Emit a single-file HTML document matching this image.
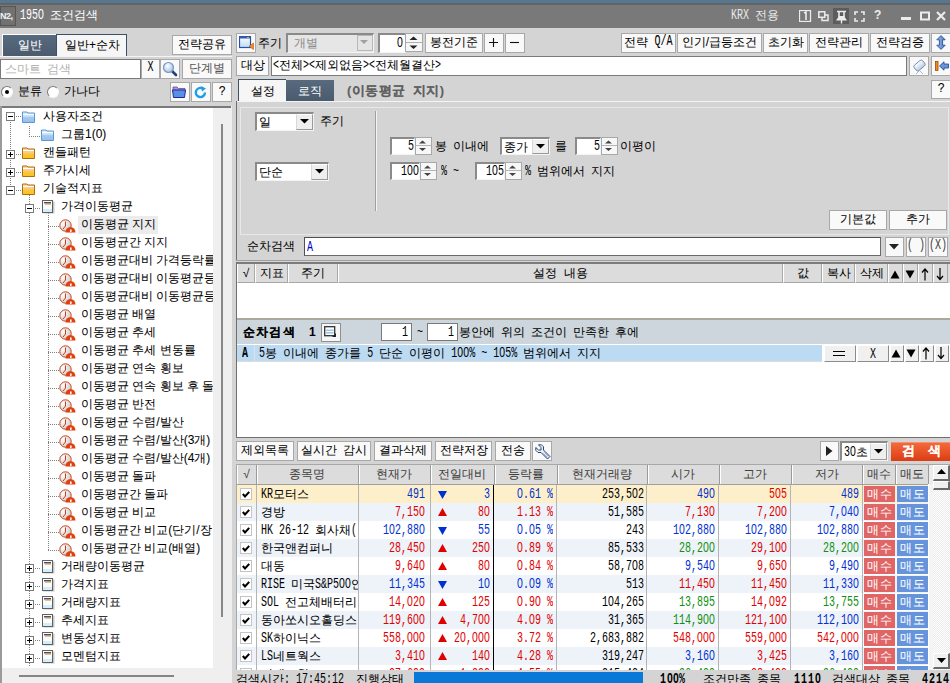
<!DOCTYPE html><html><head><meta charset="utf-8"><style>
*{margin:0;padding:0;box-sizing:content-box}
html,body{width:950px;height:683px;overflow:hidden;background:#d4d4d4;font-family:"Liberation Sans",sans-serif;font-size:12px;color:#000;word-spacing:2.7px}
div{position:absolute}
.t{white-space:nowrap;line-height:14px;-webkit-text-stroke-width:0.05px}
.btn span{-webkit-text-stroke-width:0.05px;position:relative;top:-1px}
.btn{background:#f9f9f9;border:1px solid #a8a8a8;text-align:center;white-space:nowrap}
.inp{background:#fff;border:1px solid #7a7a7a}
.m{word-spacing:0;-webkit-text-stroke-width:0;display:inline-block;font-family:"Liberation Mono",monospace;font-size:10px;transform:scaleY(1.4);transform-origin:50% 60%}
.z{font-style:normal;display:inline-block;width:6px;text-align:center;font-family:"Liberation Sans",sans-serif;font-size:10.5px;line-height:10px}
.inset{background:#fff;border-top:2px solid #8a8a8a;border-left:2px solid #8a8a8a;border-right:1px solid #f4f4f4;border-bottom:1px solid #f4f4f4}
</style></head><body><div style="left:0px;top:0px;width:950px;height:3px;background:#56778f"></div>
<div style="left:0px;top:3px;width:950px;height:25px;background:#797979"></div>
<div style="left:0px;top:3px;width:950px;height:2px;background:#636363"></div>
<div style="left:0px;top:6px;width:14px;height:18px;background:#717171;border:1px solid #565656;"></div>
<div class="t" style="left:0px;top:9px;color:#f0f0f0;font-size:9px;letter-spacing:-0.5px"><b>N2,</b></div>
<div class="t" style="left:20px;top:8px;color:#fff;font-size:12px"><span class="m">195<i class="z">0</i>&nbsp;</span>조건검색</div>
<div class="t" style="left:731px;top:8px;color:#e8e8e8;font-size:12px"><span class="m">KRX</span> 전용</div>
<svg style="position:absolute;left:799px;top:10px;" width="13" height="12" viewBox="0 0 13 12"><rect x="0.5" y="0.5" width="11" height="11" fill="none" stroke="#ececec" stroke-width="1.3"/><path d="M5 3 L7 2 L7 10" stroke="#ececec" stroke-width="1.6" fill="none"/></svg>
<svg style="position:absolute;left:818px;top:11px;" width="11" height="11" viewBox="0 0 11 11"><rect x="0.8" y="0.8" width="6" height="5.5" fill="none" stroke="#ececec" stroke-width="1.5"/><path d="M4 6.5 V9.5 H10 V4 H7" stroke="#ececec" stroke-width="1.5" fill="none"/></svg>
<div style="left:833px;top:8px;width:16px;height:16px;background:#5c5c5c"></div>
<svg style="position:absolute;left:834px;top:9px;" width="15" height="15" viewBox="0 0 15 15"><path d="M3 2.5 H12 M5 2.5 V8 M10 2.5 V8" stroke="#ececec" stroke-width="1.6" fill="none"/><path d="M5 7 H10 L13 11.5 H2 Z" fill="#ececec"/><path d="M7.5 11 V14.5" stroke="#ececec" stroke-width="1.4"/></svg>
<svg style="position:absolute;left:854px;top:11px;" width="11" height="11" viewBox="0 0 11 11"><path d="M1 4 V1 H4 M7 1 H10 V4 M10 7 V10 H7 M4 10 H1 V7" stroke="#ececec" stroke-width="1.6" fill="none"/></svg>
<div class="t" style="left:874px;top:8px;color:#ececec;font-size:12px"><b>?</b></div>
<div style="left:901px;top:17px;width:10px;height:3px;background:#ececec"></div>
<svg style="position:absolute;left:920px;top:11px;" width="10" height="10" viewBox="0 0 10 10"><rect x="1" y="1.5" width="8" height="7" fill="none" stroke="#ececec" stroke-width="2"/></svg>
<svg style="position:absolute;left:936px;top:11px;" width="10" height="10" viewBox="0 0 10 10"><path d="M1 1 L9 9 M9 1 L1 9" stroke="#ececec" stroke-width="2.2"/></svg>
<div style="left:2px;top:34px;width:53px;height:21px;background:linear-gradient(#586a7e,#4a5b6e);border:1px solid #fff;border-bottom:none"></div>
<div class="t" style="left:18px;top:38px;color:#fff;font-size:12px">일반</div>
<div style="left:56px;top:34px;width:69px;height:21px;background:#f6f6f6;border-top:1px solid #3e5066;border-left:1px solid #3e5066;border-right:1px solid #3e5066"></div>
<div class="t" style="left:65px;top:38px;font-size:12px">일반+순차</div>
<div style="left:0px;top:56px;width:232px;height:1px;background:#f4f4f4"></div>
<div class="btn" style="left:172px;top:35px;width:58px;height:18px;line-height:18px;"><span style="">전략공유</span></div>
<div class="inp" style="left:0px;top:59px;width:139px;height:18px;"></div>
<div class="t" style="left:5px;top:62px;color:#b4b4b4;font-size:12px">스마트 검색</div>
<div class="btn" style="left:141px;top:59px;width:17px;height:18px;line-height:18px;"><span style=""><span class="m">X</span></span></div>
<div class="btn" style="left:160px;top:59px;width:18px;height:18px;line-height:18px;"><span style=""></span></div>
<svg style="position:absolute;left:162px;top:61px;" width="16" height="16" viewBox="0 0 16 16"><defs><radialGradient id="mg" cx="0.4" cy="0.35" r="0.7"><stop offset="0" stop-color="#ffffff"/><stop offset="1" stop-color="#9cc0e4"/></radialGradient></defs><path d="M10 10 L14 14" stroke="#243f7a" stroke-width="2.6" stroke-linecap="round"/><circle cx="6.5" cy="6.5" r="5" fill="url(#mg)" stroke="#7c96c0" stroke-width="1.2"/></svg>
<div class="btn" style="left:182px;top:59px;width:48px;height:18px;line-height:18px;color:#555"><span style="">단계별</span></div>
<div style="left:1px;top:86px;width:10px;height:10px;background:#fff;border:1px solid;border-color:#7a7a7a #f8f8f8 #f8f8f8 #7a7a7a;border-radius:50%"></div>
<div style="left:5px;top:90px;width:4px;height:4px;background:#000;border-radius:50%"></div>
<div class="t" style="left:18px;top:84px;font-size:12px">분류</div>
<div style="left:47px;top:86px;width:10px;height:10px;background:#fff;border:1px solid;border-color:#7a7a7a #f8f8f8 #f8f8f8 #7a7a7a;border-radius:50%"></div>
<div class="t" style="left:64px;top:84px;font-size:12px">가나다</div>
<div class="btn" style="left:170px;top:82px;width:18px;height:18px;line-height:18px;"><span style=""></span></div>
<svg style="position:absolute;left:172px;top:85px;" width="15" height="13" viewBox="0 0 15 13"><path d="M1 2 H5 L6.5 3.5 H13 V7 H1 Z" fill="#b090d8" stroke="#6a4aa0" stroke-width="0.8"/><path d="M0.5 5 H13.5 L12.5 12.5 H1.5 Z" fill="#5b8fe6" stroke="#1a2a9a" stroke-width="1"/></svg>
<div class="btn" style="left:191px;top:82px;width:18px;height:18px;line-height:18px;"><span style=""></span></div>
<svg style="position:absolute;left:194px;top:86px;" width="14" height="13" viewBox="0 0 14 13"><path d="M11 6.5 A4.6 4.6 0 1 1 8.5 2.4" fill="none" stroke="#1c9de4" stroke-width="2.4"/><path d="M7 0 L12 2.5 L8 5.5 Z" fill="#1c9de4"/></svg>
<div class="btn" style="left:212px;top:82px;width:18px;height:18px;line-height:18px;"><span style="">?</span></div>
<div style="left:0px;top:106px;width:232px;height:577px;background:#efefef"></div>
<div style="left:2px;top:108px;width:211px;height:560px;background:#fff"></div>
<div style="left:0px;top:106px;width:231px;height:2px;background:#7a7a7a"></div>
<div style="left:0px;top:106px;width:2px;height:577px;background:#9a9a9a"></div>
<div style="left:221px;top:124px;width:2px;height:493px;background:#888"></div>
<div style="left:19px;top:675px;width:155px;height:2px;background:#858585"></div>
<div style="left:10px;top:122px;width:1px;height:64px;background-image:linear-gradient(#808080 50%,transparent 50%);background-size:1px 2px"></div>
<div style="left:29px;top:126px;width:1px;height:10px;background-image:linear-gradient(#808080 50%,transparent 50%);background-size:1px 2px"></div>
<div style="left:29px;top:195px;width:1px;height:472px;background-image:linear-gradient(#808080 50%,transparent 50%);background-size:1px 2px"></div>
<div style="left:48px;top:213px;width:1px;height:337px;background-image:linear-gradient(#808080 50%,transparent 50%);background-size:1px 2px"></div>
<div style="left:16px;top:116px;width:6px;height:1px;background-image:linear-gradient(90deg,#808080 50%,transparent 50%);background-size:2px 1px"></div>
<div style="left:6px;top:112px;width:7px;height:7px;background:#fff;border:1px solid #7a7a7a"></div>
<div style="left:8px;top:116px;width:5px;height:1px;background:#000"></div>
<svg style="position:absolute;left:22px;top:111px;" width="13" height="12" viewBox="0 0 13 12"><defs><linearGradient id="fbg" x1="0" y1="0" x2="0" y2="1"><stop offset="0" stop-color="#d8ecfb"/><stop offset="0.45" stop-color="#c4e0f8"/><stop offset="0.5" stop-color="#a6cbef"/><stop offset="1" stop-color="#94bfe9"/></linearGradient></defs><path d="M0.5 1 H5 L6 2 H12.5 V11.5 H0.5 Z" fill="url(#fbg)" stroke="#5f97d2" stroke-width="1"/><path d="M1 3.5 H12" stroke="#fff" stroke-width="1"/></svg>
<div class="t" style="left:43px;top:109px;font-size:12px;width:170px;overflow:hidden;word-spacing:0">사용자조건</div>
<div style="left:29px;top:136px;width:12px;height:1px;background-image:linear-gradient(90deg,#808080 50%,transparent 50%);background-size:2px 1px"></div>
<svg style="position:absolute;left:41px;top:129px;" width="13" height="12" viewBox="0 0 13 12"><defs><linearGradient id="fbg" x1="0" y1="0" x2="0" y2="1"><stop offset="0" stop-color="#d8ecfb"/><stop offset="0.45" stop-color="#c4e0f8"/><stop offset="0.5" stop-color="#a6cbef"/><stop offset="1" stop-color="#94bfe9"/></linearGradient></defs><path d="M0.5 1 H5 L6 2 H12.5 V11.5 H0.5 Z" fill="url(#fbg)" stroke="#5f97d2" stroke-width="1"/><path d="M1 3.5 H12" stroke="#fff" stroke-width="1"/></svg>
<div class="t" style="left:61px;top:127px;font-size:12px;width:152px;overflow:hidden;word-spacing:0">그룹1(0)</div>
<div style="left:16px;top:154px;width:6px;height:1px;background-image:linear-gradient(90deg,#808080 50%,transparent 50%);background-size:2px 1px"></div>
<div style="left:6px;top:150px;width:7px;height:7px;background:#fff;border:1px solid #7a7a7a"></div>
<div style="left:8px;top:154px;width:5px;height:1px;background:#000"></div>
<div style="left:10px;top:152px;width:1px;height:5px;background:#000"></div>
<svg style="position:absolute;left:22px;top:147px;" width="13" height="12" viewBox="0 0 13 12"><defs><linearGradient id="fyg" x1="0" y1="0" x2="0" y2="1"><stop offset="0" stop-color="#fdd8a8"/><stop offset="0.45" stop-color="#fcc890"/><stop offset="0.55" stop-color="#fcc838"/><stop offset="1" stop-color="#f8c020"/></linearGradient></defs><path d="M0.5 1 H5 L6 2 H12.5 V11.5 H0.5 Z" fill="url(#fyg)" stroke="#a87010" stroke-width="1"/><path d="M1 3.5 H12" stroke="#fff" stroke-width="1"/></svg>
<div class="t" style="left:43px;top:145px;font-size:12px;width:170px;overflow:hidden;word-spacing:0">캔들패턴</div>
<div style="left:16px;top:172px;width:6px;height:1px;background-image:linear-gradient(90deg,#808080 50%,transparent 50%);background-size:2px 1px"></div>
<div style="left:6px;top:168px;width:7px;height:7px;background:#fff;border:1px solid #7a7a7a"></div>
<div style="left:8px;top:172px;width:5px;height:1px;background:#000"></div>
<div style="left:10px;top:170px;width:1px;height:5px;background:#000"></div>
<svg style="position:absolute;left:22px;top:165px;" width="13" height="12" viewBox="0 0 13 12"><defs><linearGradient id="fyg" x1="0" y1="0" x2="0" y2="1"><stop offset="0" stop-color="#fdd8a8"/><stop offset="0.45" stop-color="#fcc890"/><stop offset="0.55" stop-color="#fcc838"/><stop offset="1" stop-color="#f8c020"/></linearGradient></defs><path d="M0.5 1 H5 L6 2 H12.5 V11.5 H0.5 Z" fill="url(#fyg)" stroke="#a87010" stroke-width="1"/><path d="M1 3.5 H12" stroke="#fff" stroke-width="1"/></svg>
<div class="t" style="left:43px;top:163px;font-size:12px;width:170px;overflow:hidden;word-spacing:0">주가시세</div>
<div style="left:16px;top:190px;width:6px;height:1px;background-image:linear-gradient(90deg,#808080 50%,transparent 50%);background-size:2px 1px"></div>
<div style="left:6px;top:186px;width:7px;height:7px;background:#fff;border:1px solid #7a7a7a"></div>
<div style="left:8px;top:190px;width:5px;height:1px;background:#000"></div>
<svg style="position:absolute;left:22px;top:183px;" width="13" height="12" viewBox="0 0 13 12"><defs><linearGradient id="fyg" x1="0" y1="0" x2="0" y2="1"><stop offset="0" stop-color="#fdd8a8"/><stop offset="0.45" stop-color="#fcc890"/><stop offset="0.55" stop-color="#fcc838"/><stop offset="1" stop-color="#f8c020"/></linearGradient></defs><path d="M0.5 1 H5 L6 2 H12.5 V11.5 H0.5 Z" fill="url(#fyg)" stroke="#a87010" stroke-width="1"/><path d="M1 3.5 H12" stroke="#fff" stroke-width="1"/></svg>
<div class="t" style="left:43px;top:181px;font-size:12px;width:170px;overflow:hidden;word-spacing:0">기술적지표</div>
<div style="left:35px;top:208px;width:6px;height:1px;background-image:linear-gradient(90deg,#808080 50%,transparent 50%);background-size:2px 1px"></div>
<div style="left:25px;top:204px;width:7px;height:7px;background:#fff;border:1px solid #7a7a7a"></div>
<div style="left:27px;top:208px;width:5px;height:1px;background:#000"></div>
<svg style="position:absolute;left:42px;top:200px;" width="13" height="14" viewBox="0 0 13 14"><rect x="1.5" y="1.5" width="11" height="12" fill="#c8c8c8"/><rect x="0.5" y="0.5" width="10" height="12" fill="#fafcff" stroke="#606060"/><rect x="1" y="9" width="9" height="3" fill="#d4eefc"/><rect x="2" y="2" width="7" height="2" fill="#2050d0"/><rect x="3" y="3" width="6" height="1.6" fill="#e0a010"/><rect x="2" y="3" width="1.4" height="1" fill="#f080e0"/></svg>
<div class="t" style="left:61px;top:199px;font-size:12px;width:152px;overflow:hidden;word-spacing:0">가격이동평균</div>
<div style="left:48px;top:226px;width:11px;height:1px;background-image:linear-gradient(90deg,#808080 50%,transparent 50%);background-size:2px 1px"></div>
<svg style="position:absolute;left:59px;top:219px;" width="17" height="14" viewBox="0 0 17 14"><defs><radialGradient id="cg" cx="0.3" cy="0.3" r="0.8"><stop offset="0" stop-color="#ffffff"/><stop offset="1" stop-color="#c8c8c8"/></radialGradient></defs><circle cx="6.5" cy="6.5" r="5.7" fill="url(#cg)" stroke="#d04010" stroke-width="1"/><path d="M6.5 2.5 V7 L4 10" stroke="#c83c18" stroke-width="1" fill="none"/><path d="M6.5 13.5 A5 5.5 0 0 1 16.5 13.5 Z" fill="#e04010"/><rect x="11" y="10.5" width="1.6" height="2.4" fill="#fff"/></svg>
<div style="left:78px;top:216px;width:80px;height:18px;background:#ececec"></div>
<div class="t" style="left:81px;top:217px;font-size:12px;width:132px;overflow:hidden;word-spacing:0">이동평균 지지</div>
<div style="left:48px;top:244px;width:11px;height:1px;background-image:linear-gradient(90deg,#808080 50%,transparent 50%);background-size:2px 1px"></div>
<svg style="position:absolute;left:59px;top:237px;" width="17" height="14" viewBox="0 0 17 14"><defs><radialGradient id="cg" cx="0.3" cy="0.3" r="0.8"><stop offset="0" stop-color="#ffffff"/><stop offset="1" stop-color="#c8c8c8"/></radialGradient></defs><circle cx="6.5" cy="6.5" r="5.7" fill="url(#cg)" stroke="#d04010" stroke-width="1"/><path d="M6.5 2.5 V7 L4 10" stroke="#c83c18" stroke-width="1" fill="none"/><path d="M6.5 13.5 A5 5.5 0 0 1 16.5 13.5 Z" fill="#e04010"/><rect x="11" y="10.5" width="1.6" height="2.4" fill="#fff"/></svg>
<div class="t" style="left:81px;top:235px;font-size:12px;width:132px;overflow:hidden;word-spacing:0">이동평균간 지지</div>
<div style="left:48px;top:262px;width:11px;height:1px;background-image:linear-gradient(90deg,#808080 50%,transparent 50%);background-size:2px 1px"></div>
<svg style="position:absolute;left:59px;top:255px;" width="17" height="14" viewBox="0 0 17 14"><defs><radialGradient id="cg" cx="0.3" cy="0.3" r="0.8"><stop offset="0" stop-color="#ffffff"/><stop offset="1" stop-color="#c8c8c8"/></radialGradient></defs><circle cx="6.5" cy="6.5" r="5.7" fill="url(#cg)" stroke="#d04010" stroke-width="1"/><path d="M6.5 2.5 V7 L4 10" stroke="#c83c18" stroke-width="1" fill="none"/><path d="M6.5 13.5 A5 5.5 0 0 1 16.5 13.5 Z" fill="#e04010"/><rect x="11" y="10.5" width="1.6" height="2.4" fill="#fff"/></svg>
<div class="t" style="left:81px;top:253px;font-size:12px;width:132px;overflow:hidden;word-spacing:0">이동평균대비 가격등락률</div>
<div style="left:48px;top:280px;width:11px;height:1px;background-image:linear-gradient(90deg,#808080 50%,transparent 50%);background-size:2px 1px"></div>
<svg style="position:absolute;left:59px;top:273px;" width="17" height="14" viewBox="0 0 17 14"><defs><radialGradient id="cg" cx="0.3" cy="0.3" r="0.8"><stop offset="0" stop-color="#ffffff"/><stop offset="1" stop-color="#c8c8c8"/></radialGradient></defs><circle cx="6.5" cy="6.5" r="5.7" fill="url(#cg)" stroke="#d04010" stroke-width="1"/><path d="M6.5 2.5 V7 L4 10" stroke="#c83c18" stroke-width="1" fill="none"/><path d="M6.5 13.5 A5 5.5 0 0 1 16.5 13.5 Z" fill="#e04010"/><rect x="11" y="10.5" width="1.6" height="2.4" fill="#fff"/></svg>
<div class="t" style="left:81px;top:271px;font-size:12px;width:132px;overflow:hidden;word-spacing:0">이동평균대비 이동평균등</div>
<div style="left:48px;top:298px;width:11px;height:1px;background-image:linear-gradient(90deg,#808080 50%,transparent 50%);background-size:2px 1px"></div>
<svg style="position:absolute;left:59px;top:291px;" width="17" height="14" viewBox="0 0 17 14"><defs><radialGradient id="cg" cx="0.3" cy="0.3" r="0.8"><stop offset="0" stop-color="#ffffff"/><stop offset="1" stop-color="#c8c8c8"/></radialGradient></defs><circle cx="6.5" cy="6.5" r="5.7" fill="url(#cg)" stroke="#d04010" stroke-width="1"/><path d="M6.5 2.5 V7 L4 10" stroke="#c83c18" stroke-width="1" fill="none"/><path d="M6.5 13.5 A5 5.5 0 0 1 16.5 13.5 Z" fill="#e04010"/><rect x="11" y="10.5" width="1.6" height="2.4" fill="#fff"/></svg>
<div class="t" style="left:81px;top:289px;font-size:12px;width:132px;overflow:hidden;word-spacing:0">이동평균대비 이동평균등</div>
<div style="left:48px;top:316px;width:11px;height:1px;background-image:linear-gradient(90deg,#808080 50%,transparent 50%);background-size:2px 1px"></div>
<svg style="position:absolute;left:59px;top:309px;" width="17" height="14" viewBox="0 0 17 14"><defs><radialGradient id="cg" cx="0.3" cy="0.3" r="0.8"><stop offset="0" stop-color="#ffffff"/><stop offset="1" stop-color="#c8c8c8"/></radialGradient></defs><circle cx="6.5" cy="6.5" r="5.7" fill="url(#cg)" stroke="#d04010" stroke-width="1"/><path d="M6.5 2.5 V7 L4 10" stroke="#c83c18" stroke-width="1" fill="none"/><path d="M6.5 13.5 A5 5.5 0 0 1 16.5 13.5 Z" fill="#e04010"/><rect x="11" y="10.5" width="1.6" height="2.4" fill="#fff"/></svg>
<div class="t" style="left:81px;top:307px;font-size:12px;width:132px;overflow:hidden;word-spacing:0">이동평균 배열</div>
<div style="left:48px;top:334px;width:11px;height:1px;background-image:linear-gradient(90deg,#808080 50%,transparent 50%);background-size:2px 1px"></div>
<svg style="position:absolute;left:59px;top:327px;" width="17" height="14" viewBox="0 0 17 14"><defs><radialGradient id="cg" cx="0.3" cy="0.3" r="0.8"><stop offset="0" stop-color="#ffffff"/><stop offset="1" stop-color="#c8c8c8"/></radialGradient></defs><circle cx="6.5" cy="6.5" r="5.7" fill="url(#cg)" stroke="#d04010" stroke-width="1"/><path d="M6.5 2.5 V7 L4 10" stroke="#c83c18" stroke-width="1" fill="none"/><path d="M6.5 13.5 A5 5.5 0 0 1 16.5 13.5 Z" fill="#e04010"/><rect x="11" y="10.5" width="1.6" height="2.4" fill="#fff"/></svg>
<div class="t" style="left:81px;top:325px;font-size:12px;width:132px;overflow:hidden;word-spacing:0">이동평균 추세</div>
<div style="left:48px;top:352px;width:11px;height:1px;background-image:linear-gradient(90deg,#808080 50%,transparent 50%);background-size:2px 1px"></div>
<svg style="position:absolute;left:59px;top:345px;" width="17" height="14" viewBox="0 0 17 14"><defs><radialGradient id="cg" cx="0.3" cy="0.3" r="0.8"><stop offset="0" stop-color="#ffffff"/><stop offset="1" stop-color="#c8c8c8"/></radialGradient></defs><circle cx="6.5" cy="6.5" r="5.7" fill="url(#cg)" stroke="#d04010" stroke-width="1"/><path d="M6.5 2.5 V7 L4 10" stroke="#c83c18" stroke-width="1" fill="none"/><path d="M6.5 13.5 A5 5.5 0 0 1 16.5 13.5 Z" fill="#e04010"/><rect x="11" y="10.5" width="1.6" height="2.4" fill="#fff"/></svg>
<div class="t" style="left:81px;top:343px;font-size:12px;width:132px;overflow:hidden;word-spacing:0">이동평균 추세 변동률</div>
<div style="left:48px;top:370px;width:11px;height:1px;background-image:linear-gradient(90deg,#808080 50%,transparent 50%);background-size:2px 1px"></div>
<svg style="position:absolute;left:59px;top:363px;" width="17" height="14" viewBox="0 0 17 14"><defs><radialGradient id="cg" cx="0.3" cy="0.3" r="0.8"><stop offset="0" stop-color="#ffffff"/><stop offset="1" stop-color="#c8c8c8"/></radialGradient></defs><circle cx="6.5" cy="6.5" r="5.7" fill="url(#cg)" stroke="#d04010" stroke-width="1"/><path d="M6.5 2.5 V7 L4 10" stroke="#c83c18" stroke-width="1" fill="none"/><path d="M6.5 13.5 A5 5.5 0 0 1 16.5 13.5 Z" fill="#e04010"/><rect x="11" y="10.5" width="1.6" height="2.4" fill="#fff"/></svg>
<div class="t" style="left:81px;top:361px;font-size:12px;width:132px;overflow:hidden;word-spacing:0">이동평균 연속 횡보</div>
<div style="left:48px;top:388px;width:11px;height:1px;background-image:linear-gradient(90deg,#808080 50%,transparent 50%);background-size:2px 1px"></div>
<svg style="position:absolute;left:59px;top:381px;" width="17" height="14" viewBox="0 0 17 14"><defs><radialGradient id="cg" cx="0.3" cy="0.3" r="0.8"><stop offset="0" stop-color="#ffffff"/><stop offset="1" stop-color="#c8c8c8"/></radialGradient></defs><circle cx="6.5" cy="6.5" r="5.7" fill="url(#cg)" stroke="#d04010" stroke-width="1"/><path d="M6.5 2.5 V7 L4 10" stroke="#c83c18" stroke-width="1" fill="none"/><path d="M6.5 13.5 A5 5.5 0 0 1 16.5 13.5 Z" fill="#e04010"/><rect x="11" y="10.5" width="1.6" height="2.4" fill="#fff"/></svg>
<div class="t" style="left:81px;top:379px;font-size:12px;width:132px;overflow:hidden;word-spacing:0">이동평균 연속 횡보 후 돌</div>
<div style="left:48px;top:406px;width:11px;height:1px;background-image:linear-gradient(90deg,#808080 50%,transparent 50%);background-size:2px 1px"></div>
<svg style="position:absolute;left:59px;top:399px;" width="17" height="14" viewBox="0 0 17 14"><defs><radialGradient id="cg" cx="0.3" cy="0.3" r="0.8"><stop offset="0" stop-color="#ffffff"/><stop offset="1" stop-color="#c8c8c8"/></radialGradient></defs><circle cx="6.5" cy="6.5" r="5.7" fill="url(#cg)" stroke="#d04010" stroke-width="1"/><path d="M6.5 2.5 V7 L4 10" stroke="#c83c18" stroke-width="1" fill="none"/><path d="M6.5 13.5 A5 5.5 0 0 1 16.5 13.5 Z" fill="#e04010"/><rect x="11" y="10.5" width="1.6" height="2.4" fill="#fff"/></svg>
<div class="t" style="left:81px;top:397px;font-size:12px;width:132px;overflow:hidden;word-spacing:0">이동평균 반전</div>
<div style="left:48px;top:424px;width:11px;height:1px;background-image:linear-gradient(90deg,#808080 50%,transparent 50%);background-size:2px 1px"></div>
<svg style="position:absolute;left:59px;top:417px;" width="17" height="14" viewBox="0 0 17 14"><defs><radialGradient id="cg" cx="0.3" cy="0.3" r="0.8"><stop offset="0" stop-color="#ffffff"/><stop offset="1" stop-color="#c8c8c8"/></radialGradient></defs><circle cx="6.5" cy="6.5" r="5.7" fill="url(#cg)" stroke="#d04010" stroke-width="1"/><path d="M6.5 2.5 V7 L4 10" stroke="#c83c18" stroke-width="1" fill="none"/><path d="M6.5 13.5 A5 5.5 0 0 1 16.5 13.5 Z" fill="#e04010"/><rect x="11" y="10.5" width="1.6" height="2.4" fill="#fff"/></svg>
<div class="t" style="left:81px;top:415px;font-size:12px;width:132px;overflow:hidden;word-spacing:0">이동평균 수렴/발산</div>
<div style="left:48px;top:442px;width:11px;height:1px;background-image:linear-gradient(90deg,#808080 50%,transparent 50%);background-size:2px 1px"></div>
<svg style="position:absolute;left:59px;top:435px;" width="17" height="14" viewBox="0 0 17 14"><defs><radialGradient id="cg" cx="0.3" cy="0.3" r="0.8"><stop offset="0" stop-color="#ffffff"/><stop offset="1" stop-color="#c8c8c8"/></radialGradient></defs><circle cx="6.5" cy="6.5" r="5.7" fill="url(#cg)" stroke="#d04010" stroke-width="1"/><path d="M6.5 2.5 V7 L4 10" stroke="#c83c18" stroke-width="1" fill="none"/><path d="M6.5 13.5 A5 5.5 0 0 1 16.5 13.5 Z" fill="#e04010"/><rect x="11" y="10.5" width="1.6" height="2.4" fill="#fff"/></svg>
<div class="t" style="left:81px;top:433px;font-size:12px;width:132px;overflow:hidden;word-spacing:0">이동평균 수렴/발산(3개)</div>
<div style="left:48px;top:460px;width:11px;height:1px;background-image:linear-gradient(90deg,#808080 50%,transparent 50%);background-size:2px 1px"></div>
<svg style="position:absolute;left:59px;top:453px;" width="17" height="14" viewBox="0 0 17 14"><defs><radialGradient id="cg" cx="0.3" cy="0.3" r="0.8"><stop offset="0" stop-color="#ffffff"/><stop offset="1" stop-color="#c8c8c8"/></radialGradient></defs><circle cx="6.5" cy="6.5" r="5.7" fill="url(#cg)" stroke="#d04010" stroke-width="1"/><path d="M6.5 2.5 V7 L4 10" stroke="#c83c18" stroke-width="1" fill="none"/><path d="M6.5 13.5 A5 5.5 0 0 1 16.5 13.5 Z" fill="#e04010"/><rect x="11" y="10.5" width="1.6" height="2.4" fill="#fff"/></svg>
<div class="t" style="left:81px;top:451px;font-size:12px;width:132px;overflow:hidden;word-spacing:0">이동평균 수렴/발산(4개)</div>
<div style="left:48px;top:478px;width:11px;height:1px;background-image:linear-gradient(90deg,#808080 50%,transparent 50%);background-size:2px 1px"></div>
<svg style="position:absolute;left:59px;top:471px;" width="17" height="14" viewBox="0 0 17 14"><defs><radialGradient id="cg" cx="0.3" cy="0.3" r="0.8"><stop offset="0" stop-color="#ffffff"/><stop offset="1" stop-color="#c8c8c8"/></radialGradient></defs><circle cx="6.5" cy="6.5" r="5.7" fill="url(#cg)" stroke="#d04010" stroke-width="1"/><path d="M6.5 2.5 V7 L4 10" stroke="#c83c18" stroke-width="1" fill="none"/><path d="M6.5 13.5 A5 5.5 0 0 1 16.5 13.5 Z" fill="#e04010"/><rect x="11" y="10.5" width="1.6" height="2.4" fill="#fff"/></svg>
<div class="t" style="left:81px;top:469px;font-size:12px;width:132px;overflow:hidden;word-spacing:0">이동평균 돌파</div>
<div style="left:48px;top:496px;width:11px;height:1px;background-image:linear-gradient(90deg,#808080 50%,transparent 50%);background-size:2px 1px"></div>
<svg style="position:absolute;left:59px;top:489px;" width="17" height="14" viewBox="0 0 17 14"><defs><radialGradient id="cg" cx="0.3" cy="0.3" r="0.8"><stop offset="0" stop-color="#ffffff"/><stop offset="1" stop-color="#c8c8c8"/></radialGradient></defs><circle cx="6.5" cy="6.5" r="5.7" fill="url(#cg)" stroke="#d04010" stroke-width="1"/><path d="M6.5 2.5 V7 L4 10" stroke="#c83c18" stroke-width="1" fill="none"/><path d="M6.5 13.5 A5 5.5 0 0 1 16.5 13.5 Z" fill="#e04010"/><rect x="11" y="10.5" width="1.6" height="2.4" fill="#fff"/></svg>
<div class="t" style="left:81px;top:487px;font-size:12px;width:132px;overflow:hidden;word-spacing:0">이동평균간 돌파</div>
<div style="left:48px;top:514px;width:11px;height:1px;background-image:linear-gradient(90deg,#808080 50%,transparent 50%);background-size:2px 1px"></div>
<svg style="position:absolute;left:59px;top:507px;" width="17" height="14" viewBox="0 0 17 14"><defs><radialGradient id="cg" cx="0.3" cy="0.3" r="0.8"><stop offset="0" stop-color="#ffffff"/><stop offset="1" stop-color="#c8c8c8"/></radialGradient></defs><circle cx="6.5" cy="6.5" r="5.7" fill="url(#cg)" stroke="#d04010" stroke-width="1"/><path d="M6.5 2.5 V7 L4 10" stroke="#c83c18" stroke-width="1" fill="none"/><path d="M6.5 13.5 A5 5.5 0 0 1 16.5 13.5 Z" fill="#e04010"/><rect x="11" y="10.5" width="1.6" height="2.4" fill="#fff"/></svg>
<div class="t" style="left:81px;top:505px;font-size:12px;width:132px;overflow:hidden;word-spacing:0">이동평균 비교</div>
<div style="left:48px;top:532px;width:11px;height:1px;background-image:linear-gradient(90deg,#808080 50%,transparent 50%);background-size:2px 1px"></div>
<svg style="position:absolute;left:59px;top:525px;" width="17" height="14" viewBox="0 0 17 14"><defs><radialGradient id="cg" cx="0.3" cy="0.3" r="0.8"><stop offset="0" stop-color="#ffffff"/><stop offset="1" stop-color="#c8c8c8"/></radialGradient></defs><circle cx="6.5" cy="6.5" r="5.7" fill="url(#cg)" stroke="#d04010" stroke-width="1"/><path d="M6.5 2.5 V7 L4 10" stroke="#c83c18" stroke-width="1" fill="none"/><path d="M6.5 13.5 A5 5.5 0 0 1 16.5 13.5 Z" fill="#e04010"/><rect x="11" y="10.5" width="1.6" height="2.4" fill="#fff"/></svg>
<div class="t" style="left:81px;top:523px;font-size:12px;width:132px;overflow:hidden;word-spacing:0">이동평균간 비교(단기/장</div>
<div style="left:48px;top:550px;width:11px;height:1px;background-image:linear-gradient(90deg,#808080 50%,transparent 50%);background-size:2px 1px"></div>
<svg style="position:absolute;left:59px;top:543px;" width="17" height="14" viewBox="0 0 17 14"><defs><radialGradient id="cg" cx="0.3" cy="0.3" r="0.8"><stop offset="0" stop-color="#ffffff"/><stop offset="1" stop-color="#c8c8c8"/></radialGradient></defs><circle cx="6.5" cy="6.5" r="5.7" fill="url(#cg)" stroke="#d04010" stroke-width="1"/><path d="M6.5 2.5 V7 L4 10" stroke="#c83c18" stroke-width="1" fill="none"/><path d="M6.5 13.5 A5 5.5 0 0 1 16.5 13.5 Z" fill="#e04010"/><rect x="11" y="10.5" width="1.6" height="2.4" fill="#fff"/></svg>
<div class="t" style="left:81px;top:541px;font-size:12px;width:132px;overflow:hidden;word-spacing:0">이동평균간 비교(배열)</div>
<div style="left:35px;top:568px;width:6px;height:1px;background-image:linear-gradient(90deg,#808080 50%,transparent 50%);background-size:2px 1px"></div>
<div style="left:25px;top:564px;width:7px;height:7px;background:#fff;border:1px solid #7a7a7a"></div>
<div style="left:27px;top:568px;width:5px;height:1px;background:#000"></div>
<div style="left:29px;top:566px;width:1px;height:5px;background:#000"></div>
<svg style="position:absolute;left:42px;top:560px;" width="13" height="14" viewBox="0 0 13 14"><rect x="1.5" y="1.5" width="11" height="12" fill="#c8c8c8"/><rect x="0.5" y="0.5" width="10" height="12" fill="#fafcff" stroke="#606060"/><rect x="1" y="9" width="9" height="3" fill="#d4eefc"/><rect x="2" y="2" width="7" height="2" fill="#2050d0"/><rect x="3" y="3" width="6" height="1.6" fill="#e0a010"/><rect x="2" y="3" width="1.4" height="1" fill="#f080e0"/></svg>
<div class="t" style="left:61px;top:559px;font-size:12px;width:152px;overflow:hidden;word-spacing:0">거래량이동평균</div>
<div style="left:35px;top:586px;width:6px;height:1px;background-image:linear-gradient(90deg,#808080 50%,transparent 50%);background-size:2px 1px"></div>
<div style="left:25px;top:582px;width:7px;height:7px;background:#fff;border:1px solid #7a7a7a"></div>
<div style="left:27px;top:586px;width:5px;height:1px;background:#000"></div>
<div style="left:29px;top:584px;width:1px;height:5px;background:#000"></div>
<svg style="position:absolute;left:42px;top:578px;" width="13" height="14" viewBox="0 0 13 14"><rect x="1.5" y="1.5" width="11" height="12" fill="#c8c8c8"/><rect x="0.5" y="0.5" width="10" height="12" fill="#fafcff" stroke="#606060"/><rect x="1" y="9" width="9" height="3" fill="#d4eefc"/><rect x="2" y="2" width="7" height="2" fill="#2050d0"/><rect x="3" y="3" width="6" height="1.6" fill="#e0a010"/><rect x="2" y="3" width="1.4" height="1" fill="#f080e0"/></svg>
<div class="t" style="left:61px;top:577px;font-size:12px;width:152px;overflow:hidden;word-spacing:0">가격지표</div>
<div style="left:35px;top:604px;width:6px;height:1px;background-image:linear-gradient(90deg,#808080 50%,transparent 50%);background-size:2px 1px"></div>
<div style="left:25px;top:600px;width:7px;height:7px;background:#fff;border:1px solid #7a7a7a"></div>
<div style="left:27px;top:604px;width:5px;height:1px;background:#000"></div>
<div style="left:29px;top:602px;width:1px;height:5px;background:#000"></div>
<svg style="position:absolute;left:42px;top:596px;" width="13" height="14" viewBox="0 0 13 14"><rect x="1.5" y="1.5" width="11" height="12" fill="#c8c8c8"/><rect x="0.5" y="0.5" width="10" height="12" fill="#fafcff" stroke="#606060"/><rect x="1" y="9" width="9" height="3" fill="#d4eefc"/><rect x="2" y="2" width="7" height="2" fill="#2050d0"/><rect x="3" y="3" width="6" height="1.6" fill="#e0a010"/><rect x="2" y="3" width="1.4" height="1" fill="#f080e0"/></svg>
<div class="t" style="left:61px;top:595px;font-size:12px;width:152px;overflow:hidden;word-spacing:0">거래량지표</div>
<div style="left:35px;top:622px;width:6px;height:1px;background-image:linear-gradient(90deg,#808080 50%,transparent 50%);background-size:2px 1px"></div>
<div style="left:25px;top:618px;width:7px;height:7px;background:#fff;border:1px solid #7a7a7a"></div>
<div style="left:27px;top:622px;width:5px;height:1px;background:#000"></div>
<div style="left:29px;top:620px;width:1px;height:5px;background:#000"></div>
<svg style="position:absolute;left:42px;top:614px;" width="13" height="14" viewBox="0 0 13 14"><rect x="1.5" y="1.5" width="11" height="12" fill="#c8c8c8"/><rect x="0.5" y="0.5" width="10" height="12" fill="#fafcff" stroke="#606060"/><rect x="1" y="9" width="9" height="3" fill="#d4eefc"/><rect x="2" y="2" width="7" height="2" fill="#2050d0"/><rect x="3" y="3" width="6" height="1.6" fill="#e0a010"/><rect x="2" y="3" width="1.4" height="1" fill="#f080e0"/></svg>
<div class="t" style="left:61px;top:613px;font-size:12px;width:152px;overflow:hidden;word-spacing:0">추세지표</div>
<div style="left:35px;top:640px;width:6px;height:1px;background-image:linear-gradient(90deg,#808080 50%,transparent 50%);background-size:2px 1px"></div>
<div style="left:25px;top:636px;width:7px;height:7px;background:#fff;border:1px solid #7a7a7a"></div>
<div style="left:27px;top:640px;width:5px;height:1px;background:#000"></div>
<div style="left:29px;top:638px;width:1px;height:5px;background:#000"></div>
<svg style="position:absolute;left:42px;top:632px;" width="13" height="14" viewBox="0 0 13 14"><rect x="1.5" y="1.5" width="11" height="12" fill="#c8c8c8"/><rect x="0.5" y="0.5" width="10" height="12" fill="#fafcff" stroke="#606060"/><rect x="1" y="9" width="9" height="3" fill="#d4eefc"/><rect x="2" y="2" width="7" height="2" fill="#2050d0"/><rect x="3" y="3" width="6" height="1.6" fill="#e0a010"/><rect x="2" y="3" width="1.4" height="1" fill="#f080e0"/></svg>
<div class="t" style="left:61px;top:631px;font-size:12px;width:152px;overflow:hidden;word-spacing:0">변동성지표</div>
<div style="left:35px;top:658px;width:6px;height:1px;background-image:linear-gradient(90deg,#808080 50%,transparent 50%);background-size:2px 1px"></div>
<div style="left:25px;top:654px;width:7px;height:7px;background:#fff;border:1px solid #7a7a7a"></div>
<div style="left:27px;top:658px;width:5px;height:1px;background:#000"></div>
<div style="left:29px;top:656px;width:1px;height:5px;background:#000"></div>
<svg style="position:absolute;left:42px;top:650px;" width="13" height="14" viewBox="0 0 13 14"><rect x="1.5" y="1.5" width="11" height="12" fill="#c8c8c8"/><rect x="0.5" y="0.5" width="10" height="12" fill="#fafcff" stroke="#606060"/><rect x="1" y="9" width="9" height="3" fill="#d4eefc"/><rect x="2" y="2" width="7" height="2" fill="#2050d0"/><rect x="3" y="3" width="6" height="1.6" fill="#e0a010"/><rect x="2" y="3" width="1.4" height="1" fill="#f080e0"/></svg>
<div class="t" style="left:61px;top:649px;font-size:12px;width:152px;overflow:hidden;word-spacing:0">모멘텀지표</div>
<div class="btn" style="left:236px;top:33px;width:18px;height:18px;line-height:18px;"><span style=""></span></div>
<svg style="position:absolute;left:239px;top:36px;" width="15" height="14" viewBox="0 0 15 14"><defs><linearGradient id="wg" x1="0" y1="0" x2="0" y2="1"><stop offset="0" stop-color="#ffffff"/><stop offset="1" stop-color="#b8dcf4"/></linearGradient></defs><rect x="0.5" y="0.5" width="11" height="11" fill="url(#wg)" stroke="#2850a8" stroke-width="1.2"/><rect x="0.5" y="0.5" width="11" height="2" fill="#2f5cb8"/><rect x="8" y="1" width="2" height="1" fill="#f0a040"/><path d="M14.5 7 V13.5 L10 10.2 Z" fill="#f08a28" stroke="#c05a10" stroke-width="0.6"/></svg>
<div class="t" style="left:258px;top:36px;font-size:12px">주기</div>
<div style="left:286px;top:33px;width:85px;height:17px;background:#e6e6e6;border-top:2px solid #8a8a8a;border-left:2px solid #8a8a8a;border-right:1px solid #f4f4f4;border-bottom:1px solid #f4f4f4"></div>
<div class="t" style="left:294px;top:36px;color:#8c8c8c;font-size:12px">개별</div>
<div style="left:357px;top:35px;width:14px;height:14px;background:#e4e4e4;border:1px solid #b8b8b8"></div>
<svg style="position:absolute;left:360px;top:40px;" width="9" height="5" viewBox="0 0 9 5"><path d="M0 0 H8 L4 4 Z" fill="#a0a0a0"/></svg>
<div class="inset" style="left:378px;top:33px;width:25px;height:17px;"></div>
<div class="t" style="left:378px;top:36px;width:25px;text-align:right;font-size:12px"><span class="m"><i class="z">0</i></span></div>
<div style="left:405px;top:33px;width:16px;height:17px;background:#f6f6f6;border:1px solid #a8a8a8"></div>
<div style="left:406px;top:42px;width:16px;height:1px;background:#b0b0b0"></div>
<svg style="position:absolute;left:409px;top:36px;" width="9" height="14" viewBox="0 0 9 14"><path d="M0.5 4 H8.5 L4.5 0.5 Z M0.5 9.5 H8.5 L4.5 13 Z" fill="#222"/></svg>
<div class="btn" style="left:425px;top:33px;width:56px;height:18px;line-height:18px;"><span style="">봉전기준</span></div>
<div class="btn" style="left:484px;top:33px;width:18px;height:18px;line-height:18px;"><span style=""></span></div>
<svg style="position:absolute;left:489px;top:38px;" width="10" height="10" viewBox="0 0 10 10"><path d="M4.5 0 V9 M0 4.5 H9" stroke="#111" stroke-width="1.1"/></svg>
<div class="btn" style="left:505px;top:33px;width:18px;height:18px;line-height:18px;"><span style=""></span></div>
<svg style="position:absolute;left:510px;top:38px;" width="10" height="10" viewBox="0 0 10 10"><path d="M0 4.5 H9" stroke="#111" stroke-width="1.1"/></svg>
<div class="btn" style="left:621px;top:33px;width:53px;height:18px;line-height:18px;"><span style="">전략 <span class="m">Q/A</span></span></div>
<div class="btn" style="left:677px;top:33px;width:83px;height:18px;line-height:18px;"><span style="">인기/급등조건</span></div>
<div class="btn" style="left:763px;top:33px;width:43px;height:18px;line-height:18px;"><span style="">초기화</span></div>
<div class="btn" style="left:809px;top:33px;width:58px;height:18px;line-height:18px;"><span style="">전략관리</span></div>
<div class="btn" style="left:870px;top:33px;width:58px;height:18px;line-height:18px;"><span style="">전략검증</span></div>
<div class="btn" style="left:931px;top:33px;width:18px;height:18px;line-height:18px;"><span style=""></span></div>
<svg style="position:absolute;left:936px;top:35px;" width="10" height="15" viewBox="0 0 10 15"><defs><linearGradient id="ud" x1="0" y1="0" x2="1" y2="0"><stop offset="0" stop-color="#9cbcec"/><stop offset="1" stop-color="#4a78c8"/></linearGradient></defs><path d="M5 0.6 L9.2 4.8 H6.6 V10.2 H9.2 L5 14.4 L0.8 10.2 H3.4 V4.8 H0.8 Z" fill="url(#ud)" stroke="#2e4f94" stroke-width="0.9"/></svg>
<div class="btn" style="left:236px;top:56px;width:31px;height:18px;line-height:18px;"><span style="">대상</span></div>
<div class="inp" style="left:271px;top:56px;width:634px;height:18px;"></div>
<div class="t" style="left:273px;top:58px;font-size:12px"><span class="m">&lt;</span>전체<span class="m">&gt;&lt;</span>제외없음<span class="m">&gt;&lt;</span>전체월결산<span class="m">&gt;</span></div>
<div class="btn" style="left:909px;top:56px;width:18px;height:18px;line-height:18px;"><span style=""></span></div>
<svg style="position:absolute;left:911px;top:58px;" width="17" height="17" viewBox="0 0 17 17"><defs><linearGradient id="er" x1="0" y1="0" x2="0" y2="1"><stop offset="0" stop-color="#ffffff"/><stop offset="1" stop-color="#b8cce4"/></linearGradient></defs><rect x="3" y="4" width="11" height="7" rx="2" transform="rotate(-40 8.5 7.5)" fill="url(#er)" stroke="#7088a8" stroke-width="0.9"/><path d="M5 16 L8.5 12.5 L12 16" fill="none" stroke="#a8b8cc" stroke-width="1"/></svg>
<div class="btn" style="left:931px;top:56px;width:18px;height:18px;line-height:18px;"><span style=""></span></div>
<svg style="position:absolute;left:935px;top:61px;" width="14" height="10" viewBox="0 0 14 10"><rect x="0.5" y="0.5" width="2.5" height="9" fill="#f08a20" stroke="#a04a00" stroke-width="0.8"/><path d="M4.5 5 L9 0.8 V3 H13.5 V7 H9 V9.2 Z" fill="#6a94d6" stroke="#2e4f94" stroke-width="0.9"/></svg>
<div style="left:238px;top:79px;width:47px;height:22px;background:#f6f6f6;border-top:1px solid #3e5066;border-left:1px solid #3e5066"></div>
<div class="t" style="left:251px;top:84px;font-size:12px">설정</div>
<div style="left:286px;top:80px;width:48px;height:21px;background:linear-gradient(#586a7e,#4a5b6e)"></div>
<div class="t" style="left:298px;top:84px;color:#fff;font-size:12px">로직</div>
<div class="t" style="left:347px;top:84px;color:#606060;font-size:13px;letter-spacing:0.5px"><b>(이동평균 지지)</b></div>
<div class="btn" style="left:931px;top:80px;width:18px;height:17px;line-height:17px;"><span style="">?</span></div>
<div style="left:236px;top:101px;width:714px;height:1px;background:#f4f4f4"></div>
<div style="left:236px;top:101px;width:1px;height:160px;background:#707070"></div>
<div style="left:236px;top:260px;width:714px;height:1px;background:#a0a0a0"></div>
<div style="left:240px;top:107px;width:707px;height:126px;border:1px solid #e6e9ec"></div>
<div class="inset" style="left:255px;top:112px;width:56px;height:16px;"></div>
<div style="left:296px;top:114px;width:15px;height:14px;background:#efefef;border-left:1px solid #d8d8d8;border-top:1px solid #fff;border-right:1px solid #999;border-bottom:1px solid #999"></div>
<svg style="position:absolute;left:300px;top:119px;" width="9" height="5" viewBox="0 0 9 5"><path d="M0 0 H9 L4.5 4.5 Z" fill="#000"/></svg>
<div class="t" style="left:259px;top:115px;font-size:12px">일</div>
<div class="t" style="left:320px;top:114px;font-size:12px">주기</div>
<div class="inset" style="left:255px;top:162px;width:71px;height:16px;"></div>
<div style="left:311px;top:164px;width:15px;height:14px;background:#efefef;border-left:1px solid #d8d8d8;border-top:1px solid #fff;border-right:1px solid #999;border-bottom:1px solid #999"></div>
<svg style="position:absolute;left:315px;top:169px;" width="9" height="5" viewBox="0 0 9 5"><path d="M0 0 H9 L4.5 4.5 Z" fill="#000"/></svg>
<div class="t" style="left:259px;top:165px;font-size:12px">단순</div>
<div style="left:375px;top:111px;width:1px;height:100px;background:#a0a0a0;box-shadow:1px 0 0 #f4f4f4"></div>
<div class="inset" style="left:390px;top:137px;width:22px;height:15px;"></div>
<div class="t" style="left:390px;top:139px;width:24px;text-align:right;font-size:12px"><span class="m">5</span></div>
<div style="left:415px;top:137px;width:15px;height:16px;background:#f7f7f7;border:1px solid #a8a8a8"></div>
<div style="left:416px;top:145px;width:15px;height:1px;background:#b4b4b4"></div>
<svg style="position:absolute;left:419px;top:140px;" width="8" height="12" viewBox="0 0 8 12"><path d="M0 3.5 H7 L3.5 0.5 Z M0 8 H7 L3.5 11 Z" fill="#444"/></svg>
<div class="t" style="left:435px;top:139px;font-size:12px">봉 이내에</div>
<div class="inset" style="left:500px;top:137px;width:47px;height:15px;"></div>
<div style="left:532px;top:139px;width:15px;height:13px;background:#efefef;border-left:1px solid #d8d8d8;border-top:1px solid #fff;border-right:1px solid #999;border-bottom:1px solid #999"></div>
<svg style="position:absolute;left:536px;top:144px;" width="9" height="5" viewBox="0 0 9 5"><path d="M0 0 H9 L4.5 4.5 Z" fill="#000"/></svg>
<div class="t" style="left:504px;top:140px;font-size:12px">종가</div>
<div class="t" style="left:555px;top:139px;font-size:12px">를</div>
<div class="inset" style="left:575px;top:137px;width:23px;height:15px;"></div>
<div class="t" style="left:575px;top:139px;width:25px;text-align:right;font-size:12px"><span class="m">5</span></div>
<div style="left:601px;top:137px;width:15px;height:16px;background:#f7f7f7;border:1px solid #a8a8a8"></div>
<div style="left:602px;top:145px;width:15px;height:1px;background:#b4b4b4"></div>
<svg style="position:absolute;left:605px;top:140px;" width="8" height="12" viewBox="0 0 8 12"><path d="M0 3.5 H7 L3.5 0.5 Z M0 8 H7 L3.5 11 Z" fill="#444"/></svg>
<div class="t" style="left:620px;top:139px;font-size:12px">이평이</div>
<div class="inset" style="left:390px;top:162px;width:27px;height:15px;"></div>
<div class="t" style="left:390px;top:164px;width:29px;text-align:right;font-size:12px"><span class="m">1<i class="z">0</i><i class="z">0</i></span></div>
<div style="left:420px;top:162px;width:15px;height:16px;background:#f7f7f7;border:1px solid #a8a8a8"></div>
<div style="left:421px;top:170px;width:15px;height:1px;background:#b4b4b4"></div>
<svg style="position:absolute;left:424px;top:165px;" width="8" height="12" viewBox="0 0 8 12"><path d="M0 3.5 H7 L3.5 0.5 Z M0 8 H7 L3.5 11 Z" fill="#444"/></svg>
<div class="t" style="left:441px;top:164px;font-size:12px"><span class="m">%&nbsp;~</span></div>
<div class="inset" style="left:475px;top:162px;width:27px;height:15px;"></div>
<div class="t" style="left:475px;top:164px;width:29px;text-align:right;font-size:12px"><span class="m">1<i class="z">0</i>5</span></div>
<div style="left:505px;top:162px;width:15px;height:16px;background:#f7f7f7;border:1px solid #a8a8a8"></div>
<div style="left:506px;top:170px;width:15px;height:1px;background:#b4b4b4"></div>
<svg style="position:absolute;left:509px;top:165px;" width="8" height="12" viewBox="0 0 8 12"><path d="M0 3.5 H7 L3.5 0.5 Z M0 8 H7 L3.5 11 Z" fill="#444"/></svg>
<div class="t" style="left:525px;top:164px;font-size:12px"><span class="m">%</span> 범위에서 지지</div>
<div class="btn" style="left:829px;top:210px;width:56px;height:18px;line-height:18px;"><span style="">기본값</span></div>
<div class="btn" style="left:889px;top:210px;width:56px;height:18px;line-height:18px;"><span style="">추가</span></div>
<div class="t" style="left:247px;top:239px;font-size:12px">순차검색</div>
<div style="left:304px;top:237px;width:575px;height:17px;background:#fff;border:1px solid #6a6a6a;border-top:1px solid #505050;border-left:1px solid #505050"></div>
<div class="t" style="left:307px;top:240px;color:#0000c8"><span class="m">A</span></div>
<div class="btn" style="left:885px;top:237px;width:17px;height:18px;line-height:18px;"><span style=""></span></div>
<svg style="position:absolute;left:889px;top:244px;" width="11" height="6" viewBox="0 0 11 6"><path d="M0 0 H10 L5 5.5 Z" fill="#222"/></svg>
<div class="btn" style="left:906px;top:237px;width:18px;height:18px;line-height:18px;color:#444"><span style="-webkit-text-stroke-width:0"><span class="m">(&nbsp;)</span></span></div>
<div class="btn" style="left:928px;top:237px;width:18px;height:18px;line-height:18px;color:#444"><span style="-webkit-text-stroke-width:0"><span class="m">(X)</span></span></div>
<div style="left:236px;top:264px;width:714px;height:173px;background:#fff"></div>
<div style="left:236px;top:262px;width:714px;height:2px;background:#7c7c7c"></div>
<div style="left:236px;top:262px;width:1px;height:176px;background:#707070"></div>
<div style="left:237px;top:264px;width:16px;height:18px;background:#dcdcdc;border-right:1px solid #a8a8a8;border-bottom:1px solid #a8a8a8;border-left:1px solid #fff"></div>
<div class="t" style="left:237px;top:266px;width:18px;text-align:center;font-size:12px">√</div>
<div style="left:255px;top:264px;width:31px;height:18px;background:#dcdcdc;border-right:1px solid #a8a8a8;border-bottom:1px solid #a8a8a8;border-left:1px solid #fff"></div>
<div class="t" style="left:255px;top:266px;width:33px;text-align:center;font-size:12px">지표</div>
<div style="left:288px;top:264px;width:48px;height:18px;background:#dcdcdc;border-right:1px solid #a8a8a8;border-bottom:1px solid #a8a8a8;border-left:1px solid #fff"></div>
<div class="t" style="left:288px;top:266px;width:50px;text-align:center;font-size:12px">주기</div>
<div style="left:338px;top:264px;width:443px;height:18px;background:#dcdcdc;border-right:1px solid #a8a8a8;border-bottom:1px solid #a8a8a8;border-left:1px solid #fff"></div>
<div class="t" style="left:338px;top:266px;width:445px;text-align:center;font-size:12px">설정 내용</div>
<div style="left:783px;top:264px;width:37px;height:18px;background:#dcdcdc;border-right:1px solid #a8a8a8;border-bottom:1px solid #a8a8a8;border-left:1px solid #fff"></div>
<div class="t" style="left:783px;top:266px;width:39px;text-align:center;font-size:12px">값</div>
<div style="left:822px;top:264px;width:31px;height:18px;background:#dcdcdc;border-right:1px solid #a8a8a8;border-bottom:1px solid #a8a8a8;border-left:1px solid #fff"></div>
<div class="t" style="left:822px;top:266px;width:33px;text-align:center;font-size:12px">복사</div>
<div style="left:855px;top:264px;width:31px;height:18px;background:#dcdcdc;border-right:1px solid #a8a8a8;border-bottom:1px solid #a8a8a8;border-left:1px solid #fff"></div>
<div class="t" style="left:855px;top:266px;width:33px;text-align:center;font-size:12px">삭제</div>
<div style="left:888px;top:264px;width:13px;height:18px;background:#dcdcdc;border-right:1px solid #a8a8a8;border-bottom:1px solid #a8a8a8;border-left:1px solid #fff"></div>
<svg style="position:absolute;left:890px;top:270px;" width="10" height="9" viewBox="0 0 10 9"><path d="M0.5 8.5 H9.5 L5 0.5 Z" fill="#000"/></svg>
<div style="left:903px;top:264px;width:13px;height:18px;background:#dcdcdc;border-right:1px solid #a8a8a8;border-bottom:1px solid #a8a8a8;border-left:1px solid #fff"></div>
<svg style="position:absolute;left:905px;top:270px;" width="10" height="9" viewBox="0 0 10 9"><path d="M0.5 0.5 H9.5 L5 8.5 Z" fill="#000"/></svg>
<div style="left:918px;top:264px;width:13px;height:18px;background:#dcdcdc;border-right:1px solid #a8a8a8;border-bottom:1px solid #a8a8a8;border-left:1px solid #fff"></div>
<svg style="position:absolute;left:921px;top:268px;" width="8" height="13" viewBox="0 0 8 13"><path d="M4 1 V12.5 M1 4.5 L4 1 L7 4.5" stroke="#000" stroke-width="1.2" fill="none"/></svg>
<div style="left:933px;top:264px;width:13px;height:18px;background:#dcdcdc;border-right:1px solid #a8a8a8;border-bottom:1px solid #a8a8a8;border-left:1px solid #fff"></div>
<svg style="position:absolute;left:936px;top:268px;" width="8" height="13" viewBox="0 0 8 13"><path d="M4 0 V11.5 M1 8 L4 11.5 L7 8" stroke="#000" stroke-width="1.2" fill="none"/></svg>
<div style="left:948px;top:264px;width:2px;height:19px;background:#dcdcdc"></div>
<div style="left:237px;top:318px;width:713px;height:2px;background:#aca89c"></div>
<div style="left:237px;top:320px;width:713px;height:24px;background:#cdd6dc"></div>
<div class="t" style="left:243px;top:325px;font-size:12px;letter-spacing:1.2px"><b>순차검색</b></div>
<div class="t" style="left:309px;top:325px;font-size:12px"><b>1</b></div>
<div style="left:321px;top:323px;width:18px;height:17px;background:#f6f6f6;border:1px solid #909090"></div>
<svg style="position:absolute;left:324px;top:326px;" width="13" height="12" viewBox="0 0 13 12"><rect x="0.7" y="0.7" width="10" height="9" fill="#fff" stroke="#333" stroke-width="1.3"/><rect x="2" y="3.5" width="7.6" height="1.6" fill="#9cc8ee"/><rect x="2" y="6" width="7.6" height="1.6" fill="#9cc8ee"/><path d="M8 11 L12 7 V11 Z" fill="#222"/></svg>
<div class="inp" style="left:381px;top:323px;width:29px;height:16px;"></div>
<div class="t" style="left:381px;top:325px;width:27px;text-align:right"><span class="m">1</span></div>
<div class="t" style="left:417px;top:325px;"><span class="m">~</span></div>
<div class="inp" style="left:427px;top:323px;width:29px;height:16px;"></div>
<div class="t" style="left:427px;top:325px;width:27px;text-align:right"><span class="m">1</span></div>
<div class="t" style="left:459px;top:325px;font-size:12px">봉안에 위의 조건이 만족한 후에</div>
<div style="left:237px;top:344px;width:713px;height:1px;background:#fff"></div>
<div style="left:237px;top:345px;width:585px;height:16px;background:#bcdaf2"></div>
<div style="left:237px;top:361px;width:585px;height:1px;background:#dcdcdc"></div>
<div style="left:254px;top:345px;width:1px;height:16px;background:#d4e6f4"></div>
<div class="t" style="left:242px;top:346px;font-size:12px"><b><span class="m">A</span></b></div>
<div class="t" style="left:259px;top:346px;font-size:12px"><span class="m">5</span>봉 이내에 종가를 <span class="m">5</span> 단순 이평이 <span class="m">1<i class="z">0</i><i class="z">0</i>%&nbsp;~&nbsp;1<i class="z">0</i>5%</span> 범위에서 지지</div>
<div style="left:824px;top:345px;width:30px;height:15px;background:#f0f0f0;border-top:1px solid #fff;border-left:1px solid #fff;border-right:1px solid #8c8c8c;border-bottom:1px solid #8c8c8c"></div>
<div style="left:833px;top:351px;width:12px;height:1px;background:#000"></div>
<div style="left:833px;top:355px;width:12px;height:1px;background:#000"></div>
<div style="left:857px;top:345px;width:30px;height:15px;background:#f0f0f0;border-top:1px solid #fff;border-left:1px solid #fff;border-right:1px solid #8c8c8c;border-bottom:1px solid #8c8c8c"></div>
<div class="t" style="left:857px;top:347px;width:32px;text-align:center"><span class="m">X</span></div>
<div style="left:890px;top:345px;width:12px;height:15px;background:#f0f0f0;border-top:1px solid #fff;border-left:1px solid #fff;border-right:1px solid #8c8c8c;border-bottom:1px solid #8c8c8c"></div>
<svg style="position:absolute;left:891px;top:349px;" width="10" height="9" viewBox="0 0 10 9"><path d="M0.5 8.5 H9.5 L5 0.5 Z" fill="#000"/></svg>
<div style="left:905px;top:345px;width:12px;height:15px;background:#f0f0f0;border-top:1px solid #fff;border-left:1px solid #fff;border-right:1px solid #8c8c8c;border-bottom:1px solid #8c8c8c"></div>
<svg style="position:absolute;left:906px;top:349px;" width="10" height="9" viewBox="0 0 10 9"><path d="M0.5 0.5 H9.5 L5 8.5 Z" fill="#000"/></svg>
<div style="left:920px;top:345px;width:12px;height:15px;background:#f0f0f0;border-top:1px solid #fff;border-left:1px solid #fff;border-right:1px solid #8c8c8c;border-bottom:1px solid #8c8c8c"></div>
<svg style="position:absolute;left:922px;top:347px;" width="8" height="13" viewBox="0 0 8 13"><path d="M4 1 V12.5 M1 4.5 L4 1 L7 4.5" stroke="#000" stroke-width="1.2" fill="none"/></svg>
<div style="left:935px;top:345px;width:12px;height:15px;background:#f0f0f0;border-top:1px solid #fff;border-left:1px solid #fff;border-right:1px solid #8c8c8c;border-bottom:1px solid #8c8c8c"></div>
<svg style="position:absolute;left:937px;top:347px;" width="8" height="13" viewBox="0 0 8 13"><path d="M4 0 V11.5 M1 8 L4 11.5 L7 8" stroke="#000" stroke-width="1.2" fill="none"/></svg>
<div style="left:236px;top:437px;width:714px;height:1px;background:#707070"></div>
<div class="btn" style="left:236px;top:441px;width:56px;height:18px;line-height:18px;font-size:12px"><span style="">제외목록</span></div>
<div class="btn" style="left:297px;top:441px;width:72px;height:18px;line-height:18px;font-size:12px"><span style="">실시간 감시</span></div>
<div class="btn" style="left:374px;top:441px;width:56px;height:18px;line-height:18px;font-size:12px"><span style="">결과삭제</span></div>
<div class="btn" style="left:435px;top:441px;width:55px;height:18px;line-height:18px;font-size:12px"><span style="">전략저장</span></div>
<div class="btn" style="left:495px;top:441px;width:34px;height:18px;line-height:18px;font-size:12px"><span style="">전송</span></div>
<div class="btn" style="left:532px;top:441px;width:18px;height:18px;line-height:18px;font-size:12px"><span style=""></span></div>
<svg style="position:absolute;left:535px;top:444px;" width="17" height="16" viewBox="0 0 17 16"><defs><linearGradient id="wr" x1="0" y1="0" x2="1" y2="1"><stop offset="0" stop-color="#ffffff"/><stop offset="1" stop-color="#c8d8ec"/></linearGradient></defs><path d="M3.5 0.8 H6.5 L8.5 2.8 V6 L15 12.5 L12.5 15 L6 8.5 H3 L0.8 6.3 V3.5 L3.5 6 H6 V3.5 Z" fill="url(#wr)" stroke="#2c4470" stroke-width="1"/><path d="M9.5 8.5 L13 12 M8.5 9.5 L12 13" stroke="#90a8c8" stroke-width="0.7"/></svg>
<div class="btn" style="left:820px;top:441px;width:17px;height:18px;line-height:18px;"><span style=""></span></div>
<svg style="position:absolute;left:826px;top:446px;" width="7" height="10" viewBox="0 0 7 10"><path d="M0 0 V10 L6.5 5 Z" fill="#222"/></svg>
<div class="inset" style="left:840px;top:441px;width:45px;height:17px;"></div>
<div style="left:870px;top:443px;width:15px;height:15px;background:#efefef;border-left:1px solid #d8d8d8;border-top:1px solid #fff;border-right:1px solid #999;border-bottom:1px solid #999"></div>
<svg style="position:absolute;left:874px;top:449px;" width="9" height="5" viewBox="0 0 9 5"><path d="M0 0 H9 L4.5 4.5 Z" fill="#000"/></svg>
<div class="t" style="left:844px;top:445px;font-size:12px"><span class="m">3<i class="z">0</i></span>초</div>
<div style="left:891px;top:442px;width:59px;height:18px;background:linear-gradient(#f26a3c,#dc3c12);border-top:1px solid #f89070"></div>
<div class="t" style="left:892px;top:444px;color:#fff;width:59px;text-align:center;font-size:13px"><b>검 &nbsp;색</b></div>
<div style="left:236px;top:464px;width:714px;height:206px;background:#fff;border-left:1px solid #a8a8a8;border-top:1px solid #a8a8a8"></div>
<div style="left:237px;top:465px;width:691px;height:19px;background:#dcdcdc;border-bottom:1px solid #a0a0a0"></div>
<div style="left:237px;top:465px;width:1px;height:19px;background:#fff"></div>
<div class="t" style="left:237px;top:467px;width:19px;text-align:center;color:#404040;font-size:12px">√</div>
<div style="left:256px;top:465px;width:1px;height:19px;background:#9a9a9a"></div>
<div style="left:257px;top:465px;width:1px;height:19px;background:#fff"></div>
<div class="t" style="left:256px;top:467px;width:102px;text-align:center;color:#404040;font-size:12px">종목명</div>
<div style="left:358px;top:465px;width:1px;height:19px;background:#9a9a9a"></div>
<div style="left:359px;top:465px;width:1px;height:19px;background:#fff"></div>
<div class="t" style="left:358px;top:467px;width:72px;text-align:center;color:#404040;font-size:12px">현재가</div>
<div style="left:430px;top:465px;width:1px;height:19px;background:#9a9a9a"></div>
<div style="left:431px;top:465px;width:1px;height:19px;background:#fff"></div>
<div class="t" style="left:430px;top:467px;width:64px;text-align:center;color:#404040;font-size:12px">전일대비</div>
<div style="left:494px;top:465px;width:1px;height:19px;background:#9a9a9a"></div>
<div style="left:495px;top:465px;width:1px;height:19px;background:#fff"></div>
<div class="t" style="left:494px;top:467px;width:63px;text-align:center;color:#404040;font-size:12px">등락률</div>
<div style="left:557px;top:465px;width:1px;height:19px;background:#9a9a9a"></div>
<div style="left:558px;top:465px;width:1px;height:19px;background:#fff"></div>
<div class="t" style="left:557px;top:467px;width:90px;text-align:center;color:#404040;font-size:12px">현재거래량</div>
<div style="left:647px;top:465px;width:1px;height:19px;background:#9a9a9a"></div>
<div style="left:648px;top:465px;width:1px;height:19px;background:#fff"></div>
<div class="t" style="left:647px;top:467px;width:72px;text-align:center;color:#404040;font-size:12px">시가</div>
<div style="left:719px;top:465px;width:1px;height:19px;background:#9a9a9a"></div>
<div style="left:720px;top:465px;width:1px;height:19px;background:#fff"></div>
<div class="t" style="left:719px;top:467px;width:72px;text-align:center;color:#404040;font-size:12px">고가</div>
<div style="left:791px;top:465px;width:1px;height:19px;background:#9a9a9a"></div>
<div style="left:792px;top:465px;width:1px;height:19px;background:#fff"></div>
<div class="t" style="left:791px;top:467px;width:71px;text-align:center;color:#404040;font-size:12px">저가</div>
<div style="left:862px;top:465px;width:1px;height:19px;background:#9a9a9a"></div>
<div style="left:863px;top:465px;width:1px;height:19px;background:#fff"></div>
<div class="t" style="left:862px;top:467px;width:33px;text-align:center;color:#404040;font-size:12px">매수</div>
<div style="left:895px;top:465px;width:1px;height:19px;background:#9a9a9a"></div>
<div style="left:896px;top:465px;width:1px;height:19px;background:#fff"></div>
<div class="t" style="left:895px;top:467px;width:33px;text-align:center;color:#404040;font-size:12px">매도</div>
<div style="left:928px;top:465px;width:1px;height:19px;background:#9a9a9a"></div>
<div style="left:237px;top:485px;width:691px;height:185px;overflow:hidden">
<div style="left:0px;top:0px;width:691px;height:18px;background:#fcefc9"></div>
<div style="left:3px;top:3px;width:10px;height:10px;background:#fff;border:1px solid #c4c4c4"></div>
<svg style="position:absolute;left:5px;top:6px;" width="8" height="7" viewBox="0 0 8 7"><path d="M0.8 3 L3 5.5 L7.2 0.8" fill="none" stroke="#000" stroke-width="2"/></svg>
<div class="t" style="left:24px;top:2px;font-size:12px;width:97px;overflow:hidden"><span class="m">KR</span>모터스</div>
<div class="t" style="left:121px;top:2px;color:#0030d0;width:67px;text-align:right"><span class="m">491</span></div>
<svg style="position:absolute;left:201px;top:6px;" width="9" height="8" viewBox="0 0 9 8"><path d="M0 0 H9 L4.5 8 Z" fill="#0030d0"/></svg>
<div class="t" style="left:193px;top:2px;color:#0030d0;width:60px;text-align:right"><span class="m">3</span></div>
<div class="t" style="left:257px;top:2px;color:#0030d0;width:59px;text-align:right"><span class="m"><i class="z">0</i>.61&nbsp;%</span></div>
<div class="t" style="left:320px;top:2px;width:87px;text-align:right"><span class="m">253,5<i class="z">0</i>2</span></div>
<div class="t" style="left:410px;top:2px;color:#0030d0;width:68px;text-align:right"><span class="m">49<i class="z">0</i></span></div>
<div class="t" style="left:482px;top:2px;color:#e00000;width:68px;text-align:right"><span class="m">5<i class="z">0</i>5</span></div>
<div class="t" style="left:554px;top:2px;color:#0030d0;width:68px;text-align:right"><span class="m">489</span></div>
<div style="left:627px;top:1px;width:31px;height:16px;background:#e06666"></div>
<div class="t" style="left:627px;top:2px;color:#fff;width:31px;text-align:center;font-size:12px;letter-spacing:1px">매수</div>
<div style="left:660px;top:1px;width:31px;height:16px;background:#6594dc"></div>
<div class="t" style="left:660px;top:2px;color:#fff;width:31px;text-align:center;font-size:12px;letter-spacing:1px">매도</div>
<div style="left:0px;top:18px;width:691px;height:18px;background:#eef3f9"></div>
<div style="left:3px;top:21px;width:10px;height:10px;background:#fff;border:1px solid #c4c4c4"></div>
<svg style="position:absolute;left:5px;top:24px;" width="8" height="7" viewBox="0 0 8 7"><path d="M0.8 3 L3 5.5 L7.2 0.8" fill="none" stroke="#000" stroke-width="2"/></svg>
<div class="t" style="left:24px;top:20px;font-size:12px;width:97px;overflow:hidden">경방</div>
<div class="t" style="left:121px;top:20px;color:#e00000;width:67px;text-align:right"><span class="m">7,15<i class="z">0</i></span></div>
<svg style="position:absolute;left:201px;top:23px;" width="9" height="8" viewBox="0 0 9 8"><path d="M0 8 H9 L4.5 0 Z" fill="#e00000"/></svg>
<div class="t" style="left:193px;top:20px;color:#e00000;width:60px;text-align:right"><span class="m">8<i class="z">0</i></span></div>
<div class="t" style="left:257px;top:20px;color:#e00000;width:59px;text-align:right"><span class="m">1.13&nbsp;%</span></div>
<div class="t" style="left:320px;top:20px;width:87px;text-align:right"><span class="m">51,585</span></div>
<div class="t" style="left:410px;top:20px;color:#e00000;width:68px;text-align:right"><span class="m">7,13<i class="z">0</i></span></div>
<div class="t" style="left:482px;top:20px;color:#e00000;width:68px;text-align:right"><span class="m">7,2<i class="z">0</i><i class="z">0</i></span></div>
<div class="t" style="left:554px;top:20px;color:#0030d0;width:68px;text-align:right"><span class="m">7,<i class="z">0</i>4<i class="z">0</i></span></div>
<div style="left:627px;top:19px;width:31px;height:16px;background:#e06666"></div>
<div class="t" style="left:627px;top:20px;color:#fff;width:31px;text-align:center;font-size:12px;letter-spacing:1px">매수</div>
<div style="left:660px;top:19px;width:31px;height:16px;background:#6594dc"></div>
<div class="t" style="left:660px;top:20px;color:#fff;width:31px;text-align:center;font-size:12px;letter-spacing:1px">매도</div>
<div style="left:0px;top:36px;width:691px;height:18px;background:#ffffff"></div>
<div style="left:3px;top:39px;width:10px;height:10px;background:#fff;border:1px solid #c4c4c4"></div>
<svg style="position:absolute;left:5px;top:42px;" width="8" height="7" viewBox="0 0 8 7"><path d="M0.8 3 L3 5.5 L7.2 0.8" fill="none" stroke="#000" stroke-width="2"/></svg>
<div class="t" style="left:24px;top:38px;font-size:12px;width:97px;overflow:hidden"><span class="m">HK&nbsp;26-12&nbsp;</span>회사채<span class="m">(</span></div>
<div class="t" style="left:121px;top:38px;color:#0030d0;width:67px;text-align:right"><span class="m">1<i class="z">0</i>2,88<i class="z">0</i></span></div>
<svg style="position:absolute;left:201px;top:42px;" width="9" height="8" viewBox="0 0 9 8"><path d="M0 0 H9 L4.5 8 Z" fill="#0030d0"/></svg>
<div class="t" style="left:193px;top:38px;color:#0030d0;width:60px;text-align:right"><span class="m">55</span></div>
<div class="t" style="left:257px;top:38px;color:#0030d0;width:59px;text-align:right"><span class="m"><i class="z">0</i>.<i class="z">0</i>5&nbsp;%</span></div>
<div class="t" style="left:320px;top:38px;width:87px;text-align:right"><span class="m">243</span></div>
<div class="t" style="left:410px;top:38px;color:#0030d0;width:68px;text-align:right"><span class="m">1<i class="z">0</i>2,88<i class="z">0</i></span></div>
<div class="t" style="left:482px;top:38px;color:#0030d0;width:68px;text-align:right"><span class="m">1<i class="z">0</i>2,88<i class="z">0</i></span></div>
<div class="t" style="left:554px;top:38px;color:#0030d0;width:68px;text-align:right"><span class="m">1<i class="z">0</i>2,88<i class="z">0</i></span></div>
<div style="left:627px;top:37px;width:31px;height:16px;background:#e06666"></div>
<div class="t" style="left:627px;top:38px;color:#fff;width:31px;text-align:center;font-size:12px;letter-spacing:1px">매수</div>
<div style="left:660px;top:37px;width:31px;height:16px;background:#6594dc"></div>
<div class="t" style="left:660px;top:38px;color:#fff;width:31px;text-align:center;font-size:12px;letter-spacing:1px">매도</div>
<div style="left:0px;top:54px;width:691px;height:18px;background:#eef3f9"></div>
<div style="left:3px;top:57px;width:10px;height:10px;background:#fff;border:1px solid #c4c4c4"></div>
<svg style="position:absolute;left:5px;top:60px;" width="8" height="7" viewBox="0 0 8 7"><path d="M0.8 3 L3 5.5 L7.2 0.8" fill="none" stroke="#000" stroke-width="2"/></svg>
<div class="t" style="left:24px;top:56px;font-size:12px;width:97px;overflow:hidden">한국앤컴퍼니</div>
<div class="t" style="left:121px;top:56px;color:#e00000;width:67px;text-align:right"><span class="m">28,45<i class="z">0</i></span></div>
<svg style="position:absolute;left:201px;top:59px;" width="9" height="8" viewBox="0 0 9 8"><path d="M0 8 H9 L4.5 0 Z" fill="#e00000"/></svg>
<div class="t" style="left:193px;top:56px;color:#e00000;width:60px;text-align:right"><span class="m">25<i class="z">0</i></span></div>
<div class="t" style="left:257px;top:56px;color:#e00000;width:59px;text-align:right"><span class="m"><i class="z">0</i>.89&nbsp;%</span></div>
<div class="t" style="left:320px;top:56px;width:87px;text-align:right"><span class="m">85,533</span></div>
<div class="t" style="left:410px;top:56px;color:#109010;width:68px;text-align:right"><span class="m">28,2<i class="z">0</i><i class="z">0</i></span></div>
<div class="t" style="left:482px;top:56px;color:#e00000;width:68px;text-align:right"><span class="m">29,1<i class="z">0</i><i class="z">0</i></span></div>
<div class="t" style="left:554px;top:56px;color:#109010;width:68px;text-align:right"><span class="m">28,2<i class="z">0</i><i class="z">0</i></span></div>
<div style="left:627px;top:55px;width:31px;height:16px;background:#e06666"></div>
<div class="t" style="left:627px;top:56px;color:#fff;width:31px;text-align:center;font-size:12px;letter-spacing:1px">매수</div>
<div style="left:660px;top:55px;width:31px;height:16px;background:#6594dc"></div>
<div class="t" style="left:660px;top:56px;color:#fff;width:31px;text-align:center;font-size:12px;letter-spacing:1px">매도</div>
<div style="left:0px;top:72px;width:691px;height:18px;background:#ffffff"></div>
<div style="left:3px;top:75px;width:10px;height:10px;background:#fff;border:1px solid #c4c4c4"></div>
<svg style="position:absolute;left:5px;top:78px;" width="8" height="7" viewBox="0 0 8 7"><path d="M0.8 3 L3 5.5 L7.2 0.8" fill="none" stroke="#000" stroke-width="2"/></svg>
<div class="t" style="left:24px;top:74px;font-size:12px;width:97px;overflow:hidden">대동</div>
<div class="t" style="left:121px;top:74px;color:#e00000;width:67px;text-align:right"><span class="m">9,64<i class="z">0</i></span></div>
<svg style="position:absolute;left:201px;top:77px;" width="9" height="8" viewBox="0 0 9 8"><path d="M0 8 H9 L4.5 0 Z" fill="#e00000"/></svg>
<div class="t" style="left:193px;top:74px;color:#e00000;width:60px;text-align:right"><span class="m">8<i class="z">0</i></span></div>
<div class="t" style="left:257px;top:74px;color:#e00000;width:59px;text-align:right"><span class="m"><i class="z">0</i>.84&nbsp;%</span></div>
<div class="t" style="left:320px;top:74px;width:87px;text-align:right"><span class="m">58,7<i class="z">0</i>8</span></div>
<div class="t" style="left:410px;top:74px;color:#0030d0;width:68px;text-align:right"><span class="m">9,54<i class="z">0</i></span></div>
<div class="t" style="left:482px;top:74px;color:#e00000;width:68px;text-align:right"><span class="m">9,65<i class="z">0</i></span></div>
<div class="t" style="left:554px;top:74px;color:#0030d0;width:68px;text-align:right"><span class="m">9,49<i class="z">0</i></span></div>
<div style="left:627px;top:73px;width:31px;height:16px;background:#e06666"></div>
<div class="t" style="left:627px;top:74px;color:#fff;width:31px;text-align:center;font-size:12px;letter-spacing:1px">매수</div>
<div style="left:660px;top:73px;width:31px;height:16px;background:#6594dc"></div>
<div class="t" style="left:660px;top:74px;color:#fff;width:31px;text-align:center;font-size:12px;letter-spacing:1px">매도</div>
<div style="left:0px;top:90px;width:691px;height:18px;background:#eef3f9"></div>
<div style="left:3px;top:93px;width:10px;height:10px;background:#fff;border:1px solid #c4c4c4"></div>
<svg style="position:absolute;left:5px;top:96px;" width="8" height="7" viewBox="0 0 8 7"><path d="M0.8 3 L3 5.5 L7.2 0.8" fill="none" stroke="#000" stroke-width="2"/></svg>
<div class="t" style="left:24px;top:92px;font-size:12px;width:97px;overflow:hidden"><span class="m">RISE&nbsp;</span>미국<span class="m">S&amp;P5<i class="z">0</i><i class="z">0</i></span>언</div>
<div class="t" style="left:121px;top:92px;color:#0030d0;width:67px;text-align:right"><span class="m">11,345</span></div>
<svg style="position:absolute;left:201px;top:96px;" width="9" height="8" viewBox="0 0 9 8"><path d="M0 0 H9 L4.5 8 Z" fill="#0030d0"/></svg>
<div class="t" style="left:193px;top:92px;color:#0030d0;width:60px;text-align:right"><span class="m">1<i class="z">0</i></span></div>
<div class="t" style="left:257px;top:92px;color:#0030d0;width:59px;text-align:right"><span class="m"><i class="z">0</i>.<i class="z">0</i>9&nbsp;%</span></div>
<div class="t" style="left:320px;top:92px;width:87px;text-align:right"><span class="m">513</span></div>
<div class="t" style="left:410px;top:92px;color:#e00000;width:68px;text-align:right"><span class="m">11,45<i class="z">0</i></span></div>
<div class="t" style="left:482px;top:92px;color:#e00000;width:68px;text-align:right"><span class="m">11,45<i class="z">0</i></span></div>
<div class="t" style="left:554px;top:92px;color:#0030d0;width:68px;text-align:right"><span class="m">11,33<i class="z">0</i></span></div>
<div style="left:627px;top:91px;width:31px;height:16px;background:#e06666"></div>
<div class="t" style="left:627px;top:92px;color:#fff;width:31px;text-align:center;font-size:12px;letter-spacing:1px">매수</div>
<div style="left:660px;top:91px;width:31px;height:16px;background:#6594dc"></div>
<div class="t" style="left:660px;top:92px;color:#fff;width:31px;text-align:center;font-size:12px;letter-spacing:1px">매도</div>
<div style="left:0px;top:108px;width:691px;height:18px;background:#ffffff"></div>
<div style="left:3px;top:111px;width:10px;height:10px;background:#fff;border:1px solid #c4c4c4"></div>
<svg style="position:absolute;left:5px;top:114px;" width="8" height="7" viewBox="0 0 8 7"><path d="M0.8 3 L3 5.5 L7.2 0.8" fill="none" stroke="#000" stroke-width="2"/></svg>
<div class="t" style="left:24px;top:110px;font-size:12px;width:97px;overflow:hidden"><span class="m">SOL&nbsp;</span>전고체배터리</div>
<div class="t" style="left:121px;top:110px;color:#e00000;width:67px;text-align:right"><span class="m">14,<i class="z">0</i>2<i class="z">0</i></span></div>
<svg style="position:absolute;left:201px;top:113px;" width="9" height="8" viewBox="0 0 9 8"><path d="M0 8 H9 L4.5 0 Z" fill="#e00000"/></svg>
<div class="t" style="left:193px;top:110px;color:#e00000;width:60px;text-align:right"><span class="m">125</span></div>
<div class="t" style="left:257px;top:110px;color:#e00000;width:59px;text-align:right"><span class="m"><i class="z">0</i>.9<i class="z">0</i>&nbsp;%</span></div>
<div class="t" style="left:320px;top:110px;width:87px;text-align:right"><span class="m">1<i class="z">0</i>4,265</span></div>
<div class="t" style="left:410px;top:110px;color:#109010;width:68px;text-align:right"><span class="m">13,895</span></div>
<div class="t" style="left:482px;top:110px;color:#e00000;width:68px;text-align:right"><span class="m">14,<i class="z">0</i>92</span></div>
<div class="t" style="left:554px;top:110px;color:#109010;width:68px;text-align:right"><span class="m">13,755</span></div>
<div style="left:627px;top:109px;width:31px;height:16px;background:#e06666"></div>
<div class="t" style="left:627px;top:110px;color:#fff;width:31px;text-align:center;font-size:12px;letter-spacing:1px">매수</div>
<div style="left:660px;top:109px;width:31px;height:16px;background:#6594dc"></div>
<div class="t" style="left:660px;top:110px;color:#fff;width:31px;text-align:center;font-size:12px;letter-spacing:1px">매도</div>
<div style="left:0px;top:126px;width:691px;height:18px;background:#eef3f9"></div>
<div style="left:3px;top:129px;width:10px;height:10px;background:#fff;border:1px solid #c4c4c4"></div>
<svg style="position:absolute;left:5px;top:132px;" width="8" height="7" viewBox="0 0 8 7"><path d="M0.8 3 L3 5.5 L7.2 0.8" fill="none" stroke="#000" stroke-width="2"/></svg>
<div class="t" style="left:24px;top:128px;font-size:12px;width:97px;overflow:hidden">동아쏘시오홀딩스</div>
<div class="t" style="left:121px;top:128px;color:#e00000;width:67px;text-align:right"><span class="m">119,6<i class="z">0</i><i class="z">0</i></span></div>
<svg style="position:absolute;left:201px;top:131px;" width="9" height="8" viewBox="0 0 9 8"><path d="M0 8 H9 L4.5 0 Z" fill="#e00000"/></svg>
<div class="t" style="left:193px;top:128px;color:#e00000;width:60px;text-align:right"><span class="m">4,7<i class="z">0</i><i class="z">0</i></span></div>
<div class="t" style="left:257px;top:128px;color:#e00000;width:59px;text-align:right"><span class="m">4.<i class="z">0</i>9&nbsp;%</span></div>
<div class="t" style="left:320px;top:128px;width:87px;text-align:right"><span class="m">31,365</span></div>
<div class="t" style="left:410px;top:128px;color:#109010;width:68px;text-align:right"><span class="m">114,9<i class="z">0</i><i class="z">0</i></span></div>
<div class="t" style="left:482px;top:128px;color:#e00000;width:68px;text-align:right"><span class="m">121,1<i class="z">0</i><i class="z">0</i></span></div>
<div class="t" style="left:554px;top:128px;color:#0030d0;width:68px;text-align:right"><span class="m">112,1<i class="z">0</i><i class="z">0</i></span></div>
<div style="left:627px;top:127px;width:31px;height:16px;background:#e06666"></div>
<div class="t" style="left:627px;top:128px;color:#fff;width:31px;text-align:center;font-size:12px;letter-spacing:1px">매수</div>
<div style="left:660px;top:127px;width:31px;height:16px;background:#6594dc"></div>
<div class="t" style="left:660px;top:128px;color:#fff;width:31px;text-align:center;font-size:12px;letter-spacing:1px">매도</div>
<div style="left:0px;top:144px;width:691px;height:18px;background:#ffffff"></div>
<div style="left:3px;top:147px;width:10px;height:10px;background:#fff;border:1px solid #c4c4c4"></div>
<svg style="position:absolute;left:5px;top:150px;" width="8" height="7" viewBox="0 0 8 7"><path d="M0.8 3 L3 5.5 L7.2 0.8" fill="none" stroke="#000" stroke-width="2"/></svg>
<div class="t" style="left:24px;top:146px;font-size:12px;width:97px;overflow:hidden"><span class="m">SK</span>하이닉스</div>
<div class="t" style="left:121px;top:146px;color:#e00000;width:67px;text-align:right"><span class="m">558,<i class="z">0</i><i class="z">0</i><i class="z">0</i></span></div>
<svg style="position:absolute;left:201px;top:149px;" width="9" height="8" viewBox="0 0 9 8"><path d="M0 8 H9 L4.5 0 Z" fill="#e00000"/></svg>
<div class="t" style="left:193px;top:146px;color:#e00000;width:60px;text-align:right"><span class="m">2<i class="z">0</i>,<i class="z">0</i><i class="z">0</i><i class="z">0</i></span></div>
<div class="t" style="left:257px;top:146px;color:#e00000;width:59px;text-align:right"><span class="m">3.72&nbsp;%</span></div>
<div class="t" style="left:320px;top:146px;width:87px;text-align:right"><span class="m">2,683,882</span></div>
<div class="t" style="left:410px;top:146px;color:#e00000;width:68px;text-align:right"><span class="m">548,<i class="z">0</i><i class="z">0</i><i class="z">0</i></span></div>
<div class="t" style="left:482px;top:146px;color:#e00000;width:68px;text-align:right"><span class="m">559,<i class="z">0</i><i class="z">0</i><i class="z">0</i></span></div>
<div class="t" style="left:554px;top:146px;color:#e00000;width:68px;text-align:right"><span class="m">542,<i class="z">0</i><i class="z">0</i><i class="z">0</i></span></div>
<div style="left:627px;top:145px;width:31px;height:16px;background:#e06666"></div>
<div class="t" style="left:627px;top:146px;color:#fff;width:31px;text-align:center;font-size:12px;letter-spacing:1px">매수</div>
<div style="left:660px;top:145px;width:31px;height:16px;background:#6594dc"></div>
<div class="t" style="left:660px;top:146px;color:#fff;width:31px;text-align:center;font-size:12px;letter-spacing:1px">매도</div>
<div style="left:0px;top:162px;width:691px;height:18px;background:#eef3f9"></div>
<div style="left:3px;top:165px;width:10px;height:10px;background:#fff;border:1px solid #c4c4c4"></div>
<svg style="position:absolute;left:5px;top:168px;" width="8" height="7" viewBox="0 0 8 7"><path d="M0.8 3 L3 5.5 L7.2 0.8" fill="none" stroke="#000" stroke-width="2"/></svg>
<div class="t" style="left:24px;top:164px;font-size:12px;width:97px;overflow:hidden"><span class="m">LS</span>네트웍스</div>
<div class="t" style="left:121px;top:164px;color:#e00000;width:67px;text-align:right"><span class="m">3,41<i class="z">0</i></span></div>
<svg style="position:absolute;left:201px;top:167px;" width="9" height="8" viewBox="0 0 9 8"><path d="M0 8 H9 L4.5 0 Z" fill="#e00000"/></svg>
<div class="t" style="left:193px;top:164px;color:#e00000;width:60px;text-align:right"><span class="m">14<i class="z">0</i></span></div>
<div class="t" style="left:257px;top:164px;color:#e00000;width:59px;text-align:right"><span class="m">4.28&nbsp;%</span></div>
<div class="t" style="left:320px;top:164px;width:87px;text-align:right"><span class="m">319,247</span></div>
<div class="t" style="left:410px;top:164px;color:#0030d0;width:68px;text-align:right"><span class="m">3,16<i class="z">0</i></span></div>
<div class="t" style="left:482px;top:164px;color:#e00000;width:68px;text-align:right"><span class="m">3,425</span></div>
<div class="t" style="left:554px;top:164px;color:#0030d0;width:68px;text-align:right"><span class="m">3,16<i class="z">0</i></span></div>
<div style="left:627px;top:163px;width:31px;height:16px;background:#e06666"></div>
<div class="t" style="left:627px;top:164px;color:#fff;width:31px;text-align:center;font-size:12px;letter-spacing:1px">매수</div>
<div style="left:660px;top:163px;width:31px;height:16px;background:#6594dc"></div>
<div class="t" style="left:660px;top:164px;color:#fff;width:31px;text-align:center;font-size:12px;letter-spacing:1px">매도</div>
<div style="left:0px;top:180px;width:691px;height:18px;background:#ffffff"></div>
<div style="left:3px;top:183px;width:10px;height:10px;background:#fff;border:1px solid #c4c4c4"></div>
<svg style="position:absolute;left:5px;top:186px;" width="8" height="7" viewBox="0 0 8 7"><path d="M0.8 3 L3 5.5 L7.2 0.8" fill="none" stroke="#000" stroke-width="2"/></svg>
<div class="t" style="left:24px;top:182px;font-size:12px;width:97px;overflow:hidden">이랜드월드</div>
<div class="t" style="left:121px;top:182px;color:#e00000;width:67px;text-align:right"><span class="m">27,6<i class="z">0</i><i class="z">0</i></span></div>
<svg style="position:absolute;left:201px;top:185px;" width="9" height="8" viewBox="0 0 9 8"><path d="M0 8 H9 L4.5 0 Z" fill="#e00000"/></svg>
<div class="t" style="left:193px;top:182px;color:#e00000;width:60px;text-align:right"><span class="m">1,2<i class="z">0</i><i class="z">0</i></span></div>
<div class="t" style="left:257px;top:182px;color:#e00000;width:59px;text-align:right"><span class="m">4.55&nbsp;%</span></div>
<div class="t" style="left:320px;top:182px;width:87px;text-align:right"><span class="m">215,424</span></div>
<div class="t" style="left:410px;top:182px;color:#109010;width:68px;text-align:right"><span class="m">26,4<i class="z">0</i><i class="z">0</i></span></div>
<div class="t" style="left:482px;top:182px;color:#e00000;width:68px;text-align:right"><span class="m">28,4<i class="z">0</i><i class="z">0</i></span></div>
<div class="t" style="left:554px;top:182px;color:#109010;width:68px;text-align:right"><span class="m">26,4<i class="z">0</i><i class="z">0</i></span></div>
<div style="left:627px;top:181px;width:31px;height:16px;background:#e06666"></div>
<div class="t" style="left:627px;top:182px;color:#fff;width:31px;text-align:center;font-size:12px;letter-spacing:1px">매수</div>
<div style="left:660px;top:181px;width:31px;height:16px;background:#6594dc"></div>
<div class="t" style="left:660px;top:182px;color:#fff;width:31px;text-align:center;font-size:12px;letter-spacing:1px">매도</div>
</div>
<div style="left:256px;top:485px;width:1px;height:185px;background:#b4b4b4"></div>
<div style="left:358px;top:485px;width:1px;height:185px;background:#b4b4b4"></div>
<div style="left:430px;top:485px;width:1px;height:185px;background:#b4b4b4"></div>
<div style="left:556px;top:485px;width:1px;height:185px;background:#b4b4b4"></div>
<div style="left:646px;top:485px;width:1px;height:185px;background:#b4b4b4"></div>
<div style="left:718px;top:485px;width:1px;height:185px;background:#b4b4b4"></div>
<div style="left:790px;top:485px;width:1px;height:185px;background:#b4b4b4"></div>
<div style="left:862px;top:485px;width:1px;height:185px;background:#b4b4b4"></div>
<div style="left:493px;top:485px;width:1px;height:185px;background:#000"></div>
<div style="left:929px;top:465px;width:21px;height:205px;background:#f4f4f4"></div>
<div style="left:933px;top:465px;width:17px;height:205px;background-color:#fff;background-image:repeating-conic-gradient(#ececec 0 25%,#ffffff 0 50%);background-size:2px 2px"></div>
<div style="left:929px;top:465px;width:4px;height:19px;background:#ececec"></div>
<div style="left:933px;top:465px;width:14px;height:13px;background:#f0f0f0;border-top:1px solid #fff;border-left:1px solid #fff;border-right:2px solid #6a6a6a;border-bottom:2px solid #6a6a6a"></div>
<svg style="position:absolute;left:937px;top:469px;" width="9" height="5" viewBox="0 0 9 5"><path d="M0 5 H9 L4.5 0 Z" fill="#000"/></svg>
<div style="left:933px;top:481px;width:14px;height:6px;background:#f0f0f0;border-top:1px solid #fff;border-left:1px solid #fff;border-right:2px solid #6a6a6a;border-bottom:2px solid #6a6a6a"></div>
<div style="left:933px;top:653px;width:14px;height:13px;background:#f0f0f0;border-top:1px solid #fff;border-left:1px solid #fff;border-right:2px solid #6a6a6a;border-bottom:2px solid #6a6a6a"></div>
<svg style="position:absolute;left:937px;top:658px;" width="9" height="5" viewBox="0 0 9 5"><path d="M0 0 H9 L4.5 5 Z" fill="#000"/></svg>
<div style="left:236px;top:670px;width:714px;height:13px;background:#d4d4d4"></div>
<div class="t" style="left:236px;top:672px;font-size:12px">검색시간<span class="m">:&nbsp;17:45:12</span> &nbsp;진행상태</div>
<div style="left:414px;top:672px;width:229px;height:11px;background:#0a78d8"></div>
<div class="t" style="left:660px;top:672px;font-weight:bold;letter-spacing:1px"><b><span class="m">1<i class="z">0</i><i class="z">0</i>%</span></b></div>
<div class="t" style="left:703px;top:672px;font-size:12px">조건만족 종목</div>
<div class="t" style="left:794px;top:672px;letter-spacing:1px"><b><span class="m">111<i class="z">0</i></span></b></div>
<div class="t" style="left:832px;top:672px;font-size:12px">검색대상 종목</div>
<div class="t" style="left:922px;top:672px;letter-spacing:1px"><b><span class="m">4214</span></b></div></body></html>
